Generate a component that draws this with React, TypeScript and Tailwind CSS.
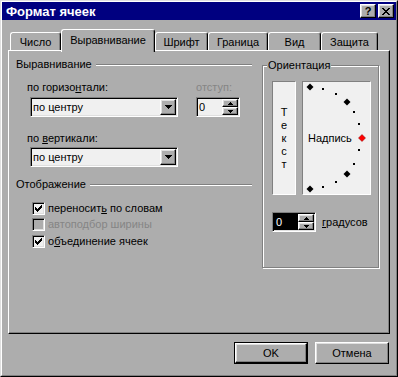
import React from "react";

const raised =
  "border border-t-white border-l-white border-r-black border-b-black shadow-[inset_-1px_-1px_0_#808080,inset_1px_1px_0_#dfdfdf]";
const sunken =
  "border border-t-[#808080] border-l-[#808080] border-r-white border-b-white shadow-[inset_1px_1px_0_#000,inset_-1px_-1px_0_#dfdfdf] p-px";

const tabs = [
  { label: "Число", w: "w-[51px]" },
  { label: "Выравнивание", w: "w-[94px]", active: true },
  { label: "Шрифт", w: "w-[53px]" },
  { label: "Граница", w: "w-[60px]" },
  { label: "Вид", w: "w-[53px]" },
  { label: "Защита", w: "w-[57px]" },
];

function DownArrow() {
  return (
    <svg width="7" height="4" viewBox="0 0 7 4" shapeRendering="crispEdges">
      <path d="M0 0h7v1H0zM1 1h5v1H1zM2 2h3v1H2zM3 3h1v1H3z" fill="#000" />
    </svg>
  );
}

function SpinArrow({ up }: { up?: boolean }) {
  return (
    <svg width="5" height="3" viewBox="0 0 5 3" shapeRendering="crispEdges">
      <path
        d={up ? "M2 0h1v1H2zM1 1h3v1H1zM0 2h5v1H0z" : "M0 0h5v1H0zM1 1h3v1H1zM2 2h1v1H2z"}
        fill="#000"
      />
    </svg>
  );
}

function SpinButtons() {
  return (
    <div className="w-[16px] flex flex-col">
      <div className={`h-[8px] ${raised} bg-[#adadad] flex items-center justify-center`}>
        <SpinArrow up />
      </div>
      <div className={`h-[8px] ${raised} bg-[#adadad] flex items-center justify-center`}>
        <SpinArrow />
      </div>
    </div>
  );
}

function Combo({ value }: { value: string }) {
  return (
    <div className={`w-[148px] h-[20px] ${sunken} bg-[#f0f0f0] flex`}>
      <div className="flex-1 flex items-center pl-[1px]">{value}</div>
      <div className={`w-[16px] h-[16px] ${raised} bg-[#adadad] flex items-center justify-center`}>
        <DownArrow />
      </div>
    </div>
  );
}

function Check({ checked, disabled }: { checked?: boolean; disabled?: boolean }) {
  return (
    <div
      className={`w-[13px] h-[13px] ${sunken} ${disabled ? "bg-[#adadad]" : "bg-[#f0f0f0]"} flex items-center justify-center`}
    >
      {checked && (
        <svg width="9" height="9" viewBox="0 0 9 9" shapeRendering="crispEdges">
          <path
            d="M1 3h1v3H1zM2 4h1v3H2zM3 5h1v3H3zM4 4h1v3H4zM5 3h1v3H5zM6 2h1v3H6zM7 1h1v3H7z"
            fill="#000"
          />
        </svg>
      )}
    </div>
  );
}

function Dial() {
  const big = [
    [7, 5, "#000"],
    [44, 20, "#000"],
    [59, 56, "#ff0000"],
    [44, 92, "#000"],
    [7, 107, "#000"],
  ] as const;
  const small = [
    [20, 7],
    [33, 12],
    [51, 30],
    [56, 42],
    [56, 68],
    [51, 82],
    [33, 100],
    [20, 105],
  ];
  return (
    <svg className="absolute inset-0" width="67" height="112" viewBox="0 0 67 112">
      {small.map(([x, y], i) => (
        <rect key={i} x={x - 1} y={y - 1} width="2" height="2" fill="#000" shapeRendering="crispEdges" />
      ))}
      {big.map(([x, y, c], i) => (
        <polygon
          key={i}
          points={`${x},${y - 3.5} ${x + 3.5},${y} ${x},${y + 3.5} ${x - 3.5},${y}`}
          fill={c}
          stroke={c === "#000" ? "none" : "#800000"}
          strokeWidth="0.5"
        />
      ))}
    </svg>
  );
}

export default function App() {
  return (
    <div className="w-[398px] h-[377px] border border-t-[#dfdfdf] border-l-[#dfdfdf] border-r-black border-b-black bg-[#adadad] font-['Liberation_Sans',Arial,sans-serif] text-[11px] leading-[13px] text-black select-none">
      <div className="h-full border border-t-white border-l-white border-r-[#808080] border-b-[#808080] flex flex-col">
        {/* title bar */}
        <div className="h-[18px] bg-[#000080] flex items-center pl-[4px] pr-[2px]">
          <div className="flex-1 text-white font-bold text-[13px]">Формат ячеек</div>
          <div className="flex gap-[2px]">
            <div className={`w-[16px] h-[14px] ${raised} bg-[#adadad] flex items-center justify-center font-bold text-[11px] leading-[11px]`}>
              ?
            </div>
            <div className={`w-[16px] h-[14px] ${raised} bg-[#adadad] flex items-center justify-center`}>
              <svg width="8" height="7" viewBox="0 0 8 7" shapeRendering="crispEdges">
                <path
                  d="M0 0h2v1H0zM6 0h2v1H6zM1 1h2v1H1zM5 1h2v1H5zM2 2h4v1H2zM3 3h2v1H3zM2 4h4v1H2zM1 5h2v1H1zM5 5h2v1H5zM0 6h2v1H0zM6 6h2v1H6z"
                  fill="#000"
                />
              </svg>
            </div>
          </div>
        </div>

        <div className="px-[6px] flex flex-col">
          {/* tabs */}
          <div className="mt-[9px] h-[21px] pl-[2px] flex items-end">
            {tabs.map((t) =>
              t.active ? (
                <div
                  key={t.label}
                  className={`${t.w} h-[23px] -mb-[2px] relative z-10 bg-[#adadad] border-t border-l border-r border-t-white border-l-white border-r-black shadow-[inset_-1px_0_0_#808080] rounded-t-[3px] flex justify-center pt-[4px]`}
                >
                  {t.label}
                </div>
              ) : (
                <div
                  key={t.label}
                  className={`${t.w} h-[18px] border-t border-l border-r border-t-white border-l-white border-r-black shadow-[inset_-1px_0_0_#808080] rounded-t-[3px] flex justify-center pt-[3px]`}
                >
                  {t.label}
                </div>
              )
            )}
          </div>

          {/* panel */}
          <div className="h-[284px] border border-t-white border-l-white border-r-black border-b-black shadow-[inset_-1px_-1px_0_#808080] flex">
            <div className="w-[244px] pl-[7px] pr-[1px] flex flex-col">
              <div className="mt-[7px] h-[13px] flex items-center">
                <span>Выравнивание</span>
                <div className="flex-1 ml-[4px] h-[2px] border-t border-b border-t-[#808080] border-b-white" />
              </div>

              <div className="mt-[10px] pl-[11px] flex">
                <div className="w-[169px] flex flex-col">
                  <div className="h-[13px]">
                    по горизо<span className="underline">н</span>тали:
                  </div>
                  <div className="mt-[3px] ml-[3px]">
                    <Combo value="по центру" />
                  </div>
                  <div className="mt-[15px] h-[13px]">
                    по <span className="underline">в</span>ертикали:
                  </div>
                  <div className="mt-[2px] ml-[3px]">
                    <Combo value="по центру" />
                  </div>
                </div>
                <div className="flex flex-col">
                  <div className="h-[13px] text-[#858585]">отступ:</div>
                  <div className={`mt-[3px] w-[44px] h-[20px] ${sunken} bg-[#f0f0f0] flex`}>
                    <div className="flex-1 flex items-center pl-[1px]">0</div>
                    <SpinButtons />
                  </div>
                </div>
              </div>

              <div className="mt-[11px] h-[13px] flex items-center">
                <span>Отображение</span>
                <div className="flex-1 ml-[4px] h-[2px] border-t border-b border-t-[#808080] border-b-white" />
              </div>

              <div className="mt-[11px] pl-[16px] flex flex-col">
                <div className="h-[13px] flex items-center gap-[3px]">
                  <Check checked />
                  <span>
                    переносит<span className="underline">ь</span> по словам
                  </span>
                </div>
                <div className="mt-[3px] h-[13px] flex items-center gap-[3px]">
                  <Check disabled />
                  <span className="text-[#858585]">автоподбор ширины</span>
                </div>
                <div className="mt-[4px] h-[13px] flex items-center gap-[3px]">
                  <Check checked />
                  <span>
                    о<span className="underline">б</span>ъединение ячеек
                  </span>
                </div>
              </div>
            </div>

            {/* orientation group */}
            <div className="ml-[9px] mt-[14px] w-[117px] h-[203px] border border-[#808080] shadow-[inset_1px_1px_0_#fff,1px_1px_0_#fff] flex flex-col">
              <div className="-mt-[7px] ml-[4px] px-[1px] self-start bg-[#adadad]">Ориентация</div>
              <div className="mt-[9px] ml-[9px] flex gap-[6px]">
                <div className="w-[24px] h-[114px] border border-t-[#808080] border-l-[#808080] border-r-white border-b-white bg-[#f0f0f0] flex flex-col items-center pt-[24px]">
                  <span>Т</span>
                  <span>е</span>
                  <span>к</span>
                  <span>с</span>
                  <span>т</span>
                </div>
                <div className="relative w-[69px] h-[114px] border border-t-[#808080] border-l-[#808080] border-r-white border-b-white bg-[#f0f0f0] flex items-center pl-[5px]">
                  <Dial />
                  <span className="relative">Надпись</span>
                </div>
              </div>
              <div className="mt-[17px] ml-[9px] flex items-center gap-[6px]">
                <div className={`w-[44px] h-[20px] ${sunken} bg-[#f0f0f0] flex`}>
                  <div className="flex-1 bg-black text-white flex items-center pl-[2px]">0</div>
                  <SpinButtons />
                </div>
                <span>
                  <span className="underline">г</span>радусов
                </span>
              </div>
            </div>
          </div>

          {/* buttons */}
          <div className="mt-[8px] pr-[1px] flex justify-end gap-[7px]">
            <div className="w-[74px] h-[22px] border border-black">
              <div className={`h-full ${raised} bg-[#adadad] flex items-center justify-center`}>OK</div>
            </div>
            <div className={`w-[74px] h-[22px] ${raised} bg-[#adadad] flex items-center justify-center`}>
              Отмена
            </div>
          </div>
        </div>
      </div>
    </div>
  );
}
